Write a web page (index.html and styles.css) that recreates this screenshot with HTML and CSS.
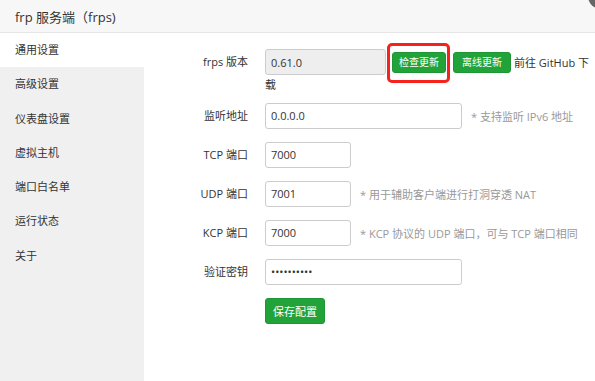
FILE: index.html
```html
<!DOCTYPE html>
<html>
<head>
    <meta charset="utf-8">
    <title>frp 服务端（frps)</title>
    <link rel="stylesheet" href="styles.css">
</head>
<body>
    <div class="header">
        <h1>frp 服务端（frps)</h1>
        <span class="close-dot"></span>
    </div>

<!--main layout-->
<div class="layout">
    <ul class="side-menu">
        <li class="active">通用设置</li>
        <li>高级设置</li>
        <li>仪表盘设置</li>
        <li>虚拟主机</li>
        <li>端口白名单</li>
        <li>运行状态</li>
        <li>关于</li>
    </ul>

    <div class="content">
        <form class="settings-form" onsubmit="return false;">
            <label class="field-label">frps 版本</label>
            <div class="field field-version"><input class="text-input input-version" type="text" value="0.61.0" disabled><span class="highlight"><button class="btn btn-small">检查更新</button></span><button class="btn btn-small btn-offline">离线更新</button><span class="link-text">前往 GitHub 下载</span></div>

            <label class="field-label">监听地址</label>
            <div class="field"><input class="text-input input-wide" type="text" value="0.0.0.0"><span class="hint">* 支持监听 IPv6 地址</span></div>

            <label class="field-label">TCP 端口</label>
            <div class="field"><input class="text-input input-port" type="text" value="7000"></div>

            <label class="field-label">UDP 端口</label>
            <div class="field"><input class="text-input input-port" type="text" value="7001"><span class="hint">* 用于辅助客户端进行打洞穿透 NAT</span></div>

            <label class="field-label">KCP 端口</label>
            <div class="field"><input class="text-input input-port" type="text" value="7000"><span class="hint">* KCP 协议的 UDP 端口，可与 TCP 端口相同</span></div>

            <label class="field-label">验证密钥</label>
            <div class="field"><input class="text-input input-wide" type="password" value="abcdefghij"></div>

            <span></span>
            <div class="field"><button class="btn btn-save">保存配置</button></div>
        </form>
    </div>
</div>
</body>
</html>
```

FILE: styles.css
```css
/* General styles for the page */
html, body {
    height: 100%;
}

body {
    margin: 0;
    padding: 0;
    background-color: #ffffff;
    color: #333333;
    font-family: 'Open Sans', 'Noto Sans CJK SC', sans-serif;
    font-size: 11px;
    overflow: hidden;
}

/* Title bar */
.header {
    position: relative;
    height: 32px;
    background-color: #f7f7f7;
    border-bottom: 1px solid #e6e6e6;
    display: flex;
    align-items: center;
    padding-left: 15px;
}

.header h1 {
    margin: 0;
    font-size: 13px;
    font-weight: normal;
    color: #333333;
}

.close-dot {
    position: absolute;
    top: -17px;
    right: -19px;
    width: 26px;
    height: 26px;
    border-radius: 50%;
    background-color: #666666;
}

.layout {
    display: flex;
    height: calc(100% - 33px);
}

/* Left menu */
.side-menu {
    list-style: none;
    margin: 0;
    padding: 0;
    width: 144px;
    flex-shrink: 0;
    background-color: #f0f0f0;
}

.side-menu li {
    height: 34.3px;
    line-height: 34px;
    padding-left: 15px;
    color: #333333;
}

.side-menu li.active {
    background-color: #ffffff;
}

/* Form */
.content {
    flex: 1;
    padding: 16px 4px 0 0;
}

.settings-form {
    display: grid;
    grid-template-columns: 104px 1fr;
    column-gap: 17px;
    row-gap: 13px;
    align-items: start;
}

.field-label {
    text-align: right;
    line-height: 26px;
    color: #333333;
}

.field {
    display: flex;
    align-items: center;
    min-height: 26px;
}

.field-version {
    display: block;
    line-height: 15px;
    margin-bottom: -2px;
}

.text-input {
    box-sizing: border-box;
    height: 26px;
    border: 1px solid #cccccc;
    border-radius: 3px;
    padding: 0 5px;
    font-family: inherit;
    font-size: 11px;
    color: #333333;
    background-color: #ffffff;
    outline: none;
}

.input-version {
    width: 121px;
    background-color: #eeeeee;
    vertical-align: middle;
}

.input-wide {
    width: 197px;
}

.input-port {
    width: 86px;
}

.hint {
    margin-left: 9px;
    color: #999999;
}

.btn {
    background-color: #22a33a;
    color: #ffffff;
    border: 1px solid #1e9634;
    border-radius: 3px;
    font-family: inherit;
    font-size: 11px;
    cursor: pointer;
    padding: 0;
}

.btn-small {
    height: 21px;
    padding: 0 6px;
    font-size: 10px;
    line-height: 19px;
    vertical-align: middle;
}

.btn-offline {
    padding: 0 8px;
    margin-left: 7px;
}

/* red annotation frame */
.highlight {
    position: relative;
    display: inline-block;
    margin-left: 6px;
    vertical-align: middle;
    line-height: 0;
}

.highlight::after {
    content: "";
    position: absolute;
    top: -9px;
    bottom: -10px;
    left: -5px;
    right: -4px;
    border: 3px solid #f5231b;
    border-radius: 5px;
}

.link-text {
    margin-left: 3px;
    vertical-align: middle;
}

.btn-save {
    width: 60px;
    height: 26px;
}
```
